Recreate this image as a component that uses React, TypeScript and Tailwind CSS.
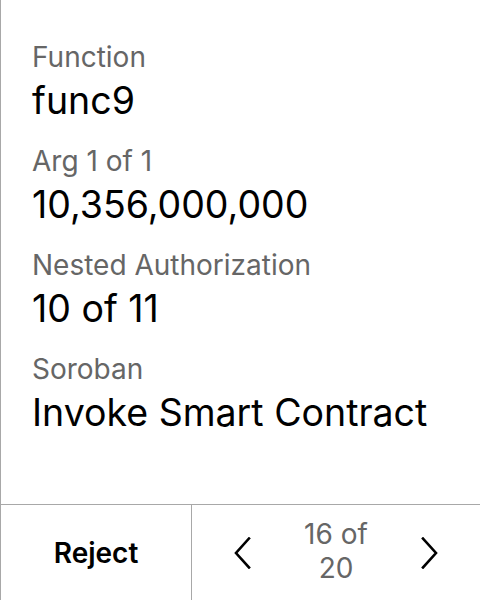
import React from "react";

const rows = [
  { label: "Function", value: "func9" },
  { label: "Arg 1 of 1", value: "10,356,000,000" },
  { label: "Nested Authorization", value: "10 of 11" },
  { label: "Soroban", value: "Invoke Smart Contract" },
];

export default function App() {
  return (
    <div
      className="w-[480px] h-[600px] bg-white flex flex-col border-l border-[#a8a8a8] text-black"
      style={{ fontFamily: "Inter, 'Noto Sans', sans-serif" }}
    >
      <div className="flex-1 flex flex-col gap-[16px] pl-[31px] pt-[39px]">
        {rows.map((r) => (
          <div key={r.label} className="flex flex-col">
            <div className="text-[28px] leading-[36px] text-[#666666]">{r.label}</div>
            <div className="text-[37.5px] leading-[52px]">{r.value}</div>
          </div>
        ))}
      </div>
      <div className="h-[96px] border-t border-[#a8a8a8] flex">
        <div className="w-[191px] border-r border-[#a8a8a8] flex items-center justify-center text-[28px] font-semibold">
          Reject
        </div>
        <div className="flex-1 flex items-center justify-between px-[42px]">
          <svg width="17" height="32" viewBox="0 0 17 32" fill="none">
            <path d="M15 1.5 L2 16 L15 30.5" stroke="black" strokeWidth="2.6" strokeLinecap="square" />
          </svg>
          <div className="text-[28px] leading-[34px] text-[#666666] text-center mb-[4px]">
            16 of
            <br />
            20
          </div>
          <svg width="17" height="32" viewBox="0 0 17 32" fill="none">
            <path d="M2 1.5 L15 16 L2 30.5" stroke="black" strokeWidth="2.6" strokeLinecap="square" />
          </svg>
        </div>
      </div>
    </div>
  );
}
